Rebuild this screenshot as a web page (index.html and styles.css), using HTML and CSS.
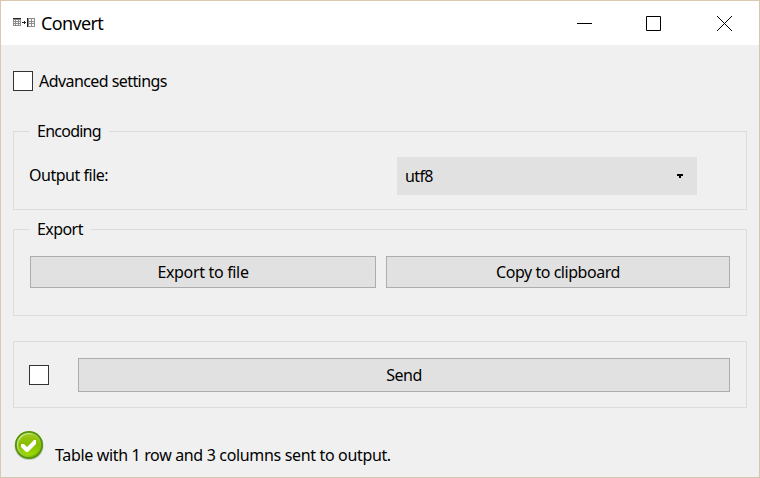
FILE: index.html
```html
<!DOCTYPE html>
<html lang="en">
<head>
<meta charset="utf-8">
<title>Convert</title>
<link rel="stylesheet" href="styles.css">
</head>
<body>
<div class="window">
  <header class="titlebar">
    <svg class="app-icon" width="22" height="9" viewBox="0 0 22 9" shape-rendering="crispEdges">
      <path d="M0 0h8v8h-8z" fill="#8c8c8c"/>
      <path d="M1 2h1v1h-1zM3 2h2v1h-2zM6 2h1v1h-1zM1 4h1v1h-1zM3 4h2v1h-2zM6 4h1v1h-1zM1 6h1v1h-1zM3 6h2v1h-2zM6 6h1v1h-1z" fill="#fff"/>
      <path d="M0 0h8v1h-8z" fill="#222"/>
      <path d="M9 4h4v1h-4zM11 3h1v3h-1z" fill="#222"/>
      <path d="M14 0h8v9h-8z" fill="#8c8c8c"/>
      <path d="M16 1h2v2h-2zM19 1h2v2h-2zM16 4h2v1h-2zM19 4h2v1h-2zM16 6h2v2h-2zM19 6h2v2h-2z" fill="#fff"/>
      <path d="M14 0h1v9h-1z" fill="#222"/>
    </svg>
    <h1 class="title">Convert</h1>
    <svg class="controls" width="155" height="15" viewBox="0 0 155 15">
      <path d="M0 7.5h15M69.500 .5h14v14h-14z" fill="none" stroke="#000"/>
      <path d="M140 0l15 15M155 0l-15 15" stroke="#000"/>
    </svg>
  </header>
  <main class="content">
    <label class="advanced"><span class="checkbox"></span><span class="t-advanced">Advanced settings</span></label>
    <section class="group encoding">
      <h2 class="legend t-encoding">Encoding</h2>
      <div class="row">
        <span class="t-output">Output file:</span>
        <div class="select"><span class="t-utf">utf8</span>
          <svg width="6" height="4" viewBox="0 0 6 4" shape-rendering="crispEdges"><path d="M0 0h6v2h-2v2h-2v-2h-2z"/></svg>
        </div>
      </div>
    </section>
    <section class="group export">
      <h2 class="legend">Export</h2>
      <div class="buttons">
        <button class="button"><span class="t-export">Export to file</span></button>
        <button class="button"><span class="t-copy">Copy to clipboard</span></button>
      </div>
    </section>
    <section class="group sending">
      <span class="checkbox"></span>
      <button class="button send"><span class="t-send">Send</span></button>
    </section>
    <footer class="status">
      <svg width="30" height="31" viewBox="0 0 30 31">
        <defs>
          <linearGradient id="fill" x1="0" y1="0" x2="0" y2="1"><stop offset="0" stop-color="#a0ca18"/><stop offset=".5" stop-color="#84bd00"/><stop offset="1" stop-color="#9fe000"/></linearGradient>
          <linearGradient id="shine" x1="0" y1="0" x2="1" y2="1"><stop offset="0" stop-color="#e0efb8"/><stop offset=".45" stop-color="#a5cc48"/><stop offset="1" stop-color="#72b000"/></linearGradient>
        </defs>
        <ellipse cx="15" cy="16" rx="14.500" ry="14" fill="#c4c7c0"/>
        <circle cx="15" cy="15" r="14" fill="#529500"/>
        <circle cx="15" cy="15" r="11.500" fill="url(#fill)" stroke="url(#shine)" stroke-width="1.500"/>
        <path d="M7 14h3l3 3 7-7h2v4l-8 8h-2l-5-5z" fill="#fff"/>
      </svg>
      <span class="t-status">Table with 1 row and 3 columns sent to output.</span>
    </footer>
  </main>
</div>
</body>
</html>
```
FILE: styles.css
```css
* { box-sizing: border-box; }
body { margin: 0; font: 16px/22px "Noto Sans", "Open Sans", sans-serif; color: #000; }
h1, h2 { margin: 0; font-size: inherit; font-weight: 400; }
span { white-space: nowrap; }
.window { width: 760px; height: 478px; background: #f0f0f0; border: 1px solid #d3c8ae; border-top-color: #dbc8b0; border-left-color: #dbc8b0; overflow: hidden; }
.titlebar { display: flex; height: 44px; padding: 0 27px 0 12px; align-items: center; background: #fff; }
.app-icon { margin-bottom: 1px; }
.title { margin-left: 6px; font-size: 18px; line-height: 24px; letter-spacing: -0.64px; }
.controls { margin-left: auto; }
.content { padding: 26px 12px 0; }
.advanced { display: flex; align-items: center; gap: 6px; height: 20px; }
.checkbox { display: block; flex: none; width: 20px; height: 20px; background: #fff; border: 1px solid #333; }
.group { border: 1px solid #dcdcdc; }
.encoding { height: 79px; margin-top: 40px; padding: 0 49px 0 15px; }
.export { height: 87px; margin-top: 19px; padding: 0 16px 0 15px; }
.legend { width: max-content; margin-top: -12px; padding: 0 8px; background: #f0f0f0; letter-spacing: -0.57px; }
.row { display: flex; justify-content: space-between; align-items: center; margin-top: 15px; }
.select { display: flex; align-items: center; justify-content: space-between; width: 300px; height: 38px; padding: 0 14px 0 8px; background: #e1e1e1; }
.buttons { display: grid; grid-template-columns: 346px 344px; gap: 10px; margin: 16px 0 0 1px; }
.button { height: 32px; padding: 0; background: #e1e1e1; border: 1px solid #adadad; font: inherit; color: inherit; }
.sending { display: flex; align-items: center; gap: 29px; height: 67px; margin-top: 25px; padding: 0 16px 0 15px; }
.send { flex: 1; height: 34px; }
.status { display: flex; margin: 22px 0 0 1px; gap: 11px; }
.t-advanced { letter-spacing: -0.57px; }
.t-encoding { letter-spacing: -0.75px; }
.t-output { margin-bottom: 2px; letter-spacing: -0.48px; }
.t-utf { letter-spacing: -0.6px; }
.t-export { letter-spacing: -0.33px; }
.t-copy { letter-spacing: -0.46px; }
.t-send { letter-spacing: -0.5px; }
.t-status { margin-top: 14px; letter-spacing: -0.34px; }
```
